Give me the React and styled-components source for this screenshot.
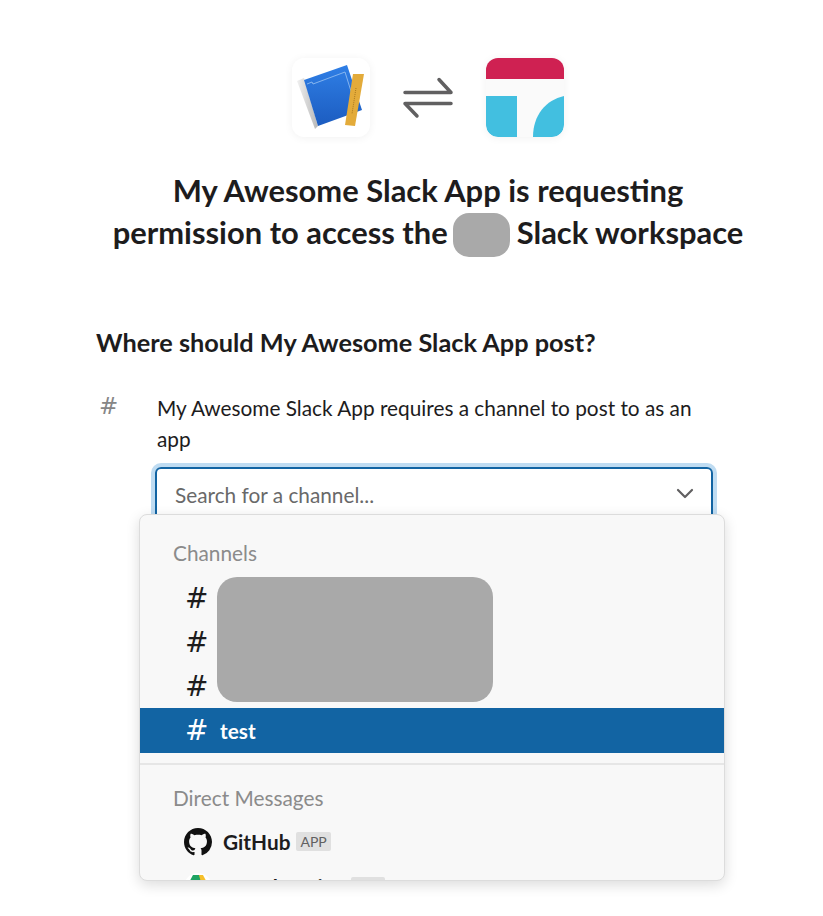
import React from "react"
import styled, { createGlobalStyle } from "styled-components"

const GlobalStyle = createGlobalStyle`
  html, body {
    margin: 0;
    background: #fff;
    height: 916px;
    overflow: hidden;
    font-family: Lato, "Open Sans", sans-serif;
    color: #1d1c1d;
  }
  * {
    box-sizing: border-box;
  }
`

const Page = styled.main`
  width: 664px;
  margin-left: 96px;
  padding-top: 58px;
`

const LogoRow = styled.div`
  display: flex;
  justify-content: center;
  align-items: center;
  gap: 33px;
`

const AppTile = styled.div`
  width: 78px;
  height: 79px;
  border-radius: 12px;
  background: #fff;
  box-shadow: 0 1px 8px rgba(0, 0, 0, 0.06);
  overflow: hidden;

  svg {
    display: block;
  }
`

const Title = styled.h1`
  margin: 33px 0 0;
  font-size: 30.9px;
  line-height: 42px;
  font-weight: 700;
  text-align: center;
  color: #1d1c1d;
`

const Redacted = styled.span`
  display: inline-block;
  width: 57px;
  height: 44px;
  margin: 0 7px 0 5px;
  border-radius: 16px;
  background: #a9a9a9;
  vertical-align: -13px;
`

const Question = styled.h2`
  margin: 68px 0 0;
  font-size: 25.3px;
  line-height: 34px;
  font-weight: 700;
`

const PostRow = styled.section`
  display: flex;
  margin-top: 33px;
`

const HashMark = styled.span`
  width: 61px;
  padding-left: 3px;
  font-family: "DejaVu Sans", sans-serif;
  font-size: 23px;
  line-height: 28px;
  color: #868686;
`

const PostBody = styled.div`
  flex: 1;
  position: relative;
  margin-left: -2px;
`

const PostText = styled.p`
  margin: 0 0 0 2px;
  width: 556px;
  font-size: 20.8px;
  line-height: 31px;
  color: #1d1c1d;
`

const SelectBox = styled.div`
  display: flex;
  align-items: center;
  justify-content: space-between;
  width: 558px;
  height: 54px;
  margin-top: 13px;
  padding: 0 17px 0 18px;
  border: 2px solid #1264a3;
  border-radius: 6px;
  box-shadow: 0 0 0 4px #bfdcf2;
  font-size: 20.8px;
  color: #696969;
`

const Dropdown = styled.div`
  position: absolute;
  top: 122px;
  left: -16px;
  width: 586px;
  height: 367px;
  overflow: hidden;
  border: 1px solid #dcdcdc;
  border-radius: 8px;
  background: #f8f8f8;
  box-shadow: 0 4px 14px rgba(0, 0, 0, 0.14);
`

const GroupLabel = styled.div`
  padding-left: 33px;
  margin-top: ${(p) => p.$top || 0}px;
  font-size: 20.8px;
  line-height: 28px;
  color: #8b8b8b;
`

const ChannelList = styled.div`
  position: relative;
  margin-top: 9px;
`

const ChannelRow = styled.div`
  display: flex;
  align-items: center;
  height: ${(p) => (p.$active ? 45 : 44)}px;
  padding-left: 45px;
  font-size: 20.8px;
  font-weight: 700;
  background: ${(p) => (p.$active ? "#1264a3" : "transparent")};
  color: ${(p) => (p.$active ? "#fff" : "#1d1c1d")};
`

const ChannelHash = styled.span`
  width: 35px;
  font-family: "DejaVu Sans", sans-serif;
  font-size: 28px;
  font-weight: 400;
`

const ChannelCover = styled.div`
  position: absolute;
  top: 1px;
  left: 77px;
  width: 276px;
  height: 125px;
  border-radius: 20px;
  background: #a9a9a9;
`

const Divider = styled.hr`
  height: 2px;
  margin: 10px 0 19px;
  border: 0;
  background: #e6e6e6;
`

const UserList = styled.div`
  margin-top: 7px;
`

const UserRow = styled.div`
  display: flex;
  align-items: center;
  height: 45px;
  padding-left: 44px;
  font-size: 20.8px;
  font-weight: 700;
  color: #1d1c1d;
`

const UserIcon = styled.span`
  display: flex;
  width: 39px;
`

const AppBadge = styled.span`
  margin-left: 6px;
  padding: 0 4px;
  height: 19px;
  border-radius: 2px;
  background: #e0e0e0;
  color: #616061;
  font-size: 14px;
  font-weight: 400;
  line-height: 19px;
`

const SwapIcon = () => (
  <svg width="50" height="42" viewBox="0 0 50 42" fill="none" stroke="#616061" strokeWidth="3.5" strokeLinecap="round" strokeLinejoin="round">
    <path d="M2 15.5h46L36 2.5" />
    <path d="M48 26.5H2l12 12.5" />
  </svg>
)

const BlueprintLogo = () => (
  <svg width="78" height="79" viewBox="0 0 78 79">
    <defs>
      <linearGradient id="bookBlue" x1="0" y1="0" x2="0" y2="1">
        <stop offset="0" stopColor="#2f7fe6" />
        <stop offset="1" stopColor="#1c5cc0" />
      </linearGradient>
      <linearGradient id="scrollGrey" x1="0" y1="0" x2="1" y2="0">
        <stop offset="0" stopColor="#f0f0f0" />
        <stop offset="1" stopColor="#b8b8b8" />
      </linearGradient>
    </defs>
    <path d="M5 23l7-3 14 48-3 3z" fill="url(#scrollGrey)" />
    <path d="M12 22 55 7l15 45-44 16z" fill="url(#bookBlue)" />
    <path d="M15 26l5-2 1 2 32-12 10 32" fill="none" stroke="#9cc4f2" strokeWidth="0.8" />
    <path d="M61 16h11l-9 52-10-1z" fill="#e3ab3a" />
    <path d="M64 30l-4 26" stroke="#a9781f" strokeWidth="1" strokeDasharray="1 1" />
  </svg>
)

const TeamLogo = () => (
  <svg width="78" height="79" viewBox="0 0 78 79">
    <rect width="78" height="79" fill="#fafafa" />
    <rect width="78" height="21" fill="#cf2152" />
    <path d="M0 38h31v41H12A12 12 0 0 1 0 67z" fill="#42bfe0" />
    <path d="M47 79c0-22 13-37 31-41v29a12 12 0 0 1-12 12z" fill="#42bfe0" />
  </svg>
)

const Chevron = () => (
  <svg width="18" height="12" viewBox="0 0 18 12" fill="none" stroke="#616061" strokeWidth="2.2" strokeLinecap="round" strokeLinejoin="round">
    <path d="M2 2l7 7 7-7" />
  </svg>
)

const GithubMark = () => (
  <svg width="28" height="28" viewBox="0 0 16 16" fill="#111">
    <path d="M8 0C3.58 0 0 3.58 0 8c0 3.54 2.29 6.53 5.47 7.59.4.07.55-.17.55-.38 0-.19-.01-.82-.01-1.49-2.01.37-2.53-.49-2.69-.94-.09-.23-.48-.94-.82-1.13-.28-.15-.68-.52-.01-.53.63-.01 1.08.58 1.23.82.72 1.21 1.87.87 2.33.66.07-.52.28-.87.51-1.07-1.78-.2-3.64-.89-3.64-3.95 0-.87.31-1.59.82-2.15-.08-.2-.36-1.02.08-2.12 0 0 .67-.21 2.2.82.64-.18 1.32-.27 2-.27s1.36.09 2 .27c1.53-1.04 2.2-.82 2.2-.82.44 1.1.16 1.92.08 2.12.51.56.82 1.27.82 2.15 0 3.07-1.87 3.75-3.65 3.95.29.25.54.73.54 1.48 0 1.07-.01 1.93-.01 2.2 0 .21.15.46.55.38A8.01 8.01 0 0 0 16 8c0-4.42-3.58-8-8-8z" />
  </svg>
)

const DriveMark = () => (
  <svg width="28" height="28" viewBox="0 0 28 28">
    <circle cx="14" cy="14" r="14" fill="#fff" />
    <path d="M14 2h5l8 15h-8z" fill="#f6c02c" />
    <path d="M9 2h6l4 15-6 9L1 17z" fill="#1fa463" />
    <path d="M9 18h18l-5 8H5z" fill="#4285f4" />
  </svg>
)

export default function App() {
  return (
    <>
      <GlobalStyle />
      <Page>
        <LogoRow>
          <AppTile>
            <BlueprintLogo />
          </AppTile>
          <SwapIcon />
          <AppTile>
            <TeamLogo />
          </AppTile>
        </LogoRow>
        <Title>
          My Awesome Slack App is requesting
          <br />
          permission to access the
          <Redacted />
          Slack workspace
        </Title>
        <Question>Where should My Awesome Slack App post?</Question>
        <PostRow>
          <HashMark>#</HashMark>
          <PostBody>
            <PostText>My Awesome Slack App requires a channel to post to as an app</PostText>
            <SelectBox>
              Search for a channel...
              <Chevron />
            </SelectBox>
            <Dropdown>
              <GroupLabel $top={24}>Channels</GroupLabel>
              <ChannelList>
                <ChannelCover />
                <ChannelRow>
                  <ChannelHash>#</ChannelHash>
                </ChannelRow>
                <ChannelRow>
                  <ChannelHash>#</ChannelHash>
                </ChannelRow>
                <ChannelRow>
                  <ChannelHash>#</ChannelHash>
                </ChannelRow>
                <ChannelRow $active>
                  <ChannelHash>#</ChannelHash>
                  test
                </ChannelRow>
              </ChannelList>
              <Divider />
              <GroupLabel>Direct Messages</GroupLabel>
              <UserList>
                <UserRow>
                  <UserIcon>
                    <GithubMark />
                  </UserIcon>
                  GitHub
                  <AppBadge>APP</AppBadge>
                </UserRow>
                <UserRow>
                  <UserIcon>
                    <DriveMark />
                  </UserIcon>
                  Google Drive
                  <AppBadge>APP</AppBadge>
                </UserRow>
              </UserList>
            </Dropdown>
          </PostBody>
        </PostRow>
      </Page>
    </>
  )
}
